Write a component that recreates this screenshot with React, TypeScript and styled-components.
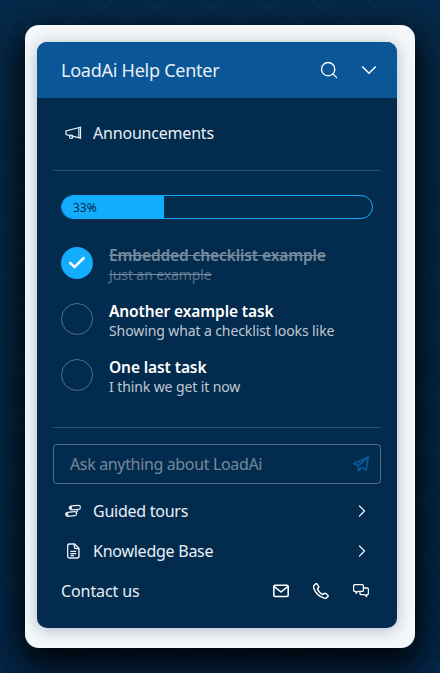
import React from 'react';
import styled, { createGlobalStyle } from 'styled-components';
import { Search, ChevronRight, Check } from 'lucide-react';

const GlobalStyle = createGlobalStyle`
  html, body {
    margin: 0;
    padding: 0;
    height: 100%;
  }
  body {
    font-family: "Noto Sans", "Open Sans", sans-serif;
    background: #04213c;
  }
`;

const Page = styled.div`
  width: 440px;
  height: 673px;
  box-sizing: border-box;
  padding: 25px;
  overflow: hidden;
  background:
    radial-gradient(circle at 20px 30px, transparent 7px, rgba(255, 255, 255, 0.016) 7.5px, rgba(255, 255, 255, 0.016) 9.5px, transparent 10px) -1px -3px / 55px 56px,
    radial-gradient(circle at 20px 30px, transparent 7px, rgba(255, 255, 255, 0.016) 7.5px, rgba(255, 255, 255, 0.016) 9.5px, transparent 10px) -28px 25px / 55px 56px,
    linear-gradient(180deg, #05294a 0%, #042844 60%, #03264a 100%);
`;

const Card = styled.div`
  width: 390px;
  height: 623px;
  box-sizing: border-box;
  padding: 17px 18px 20px 12px;
  background: #f5f8fb;
  border-radius: 14px;
  box-shadow: 0 14px 36px 6px rgba(0, 0, 0, 0.9);
`;

const Panel = styled.div`
  height: 586px;
  display: flex;
  flex-direction: column;
  background: #032b4e;
  border-radius: 10px;
  overflow: hidden;
  color: #fff;
  box-shadow: 0 2px 16px rgba(3, 43, 78, 0.3);
`;

const Header = styled.header`
  height: 56px;
  flex: none;
  display: flex;
  align-items: center;
  justify-content: space-between;
  padding: 0 20px 0 24px;
  background: #0a5696;
`;

const Title = styled.h1`
  margin: 0;
  font-size: 18px;
  font-weight: 400;
  color: #e8eff6;
  letter-spacing: -0.25px;
`;

const HeaderActions = styled.div`
  display: flex;
  align-items: center;
  gap: 22px;
  color: #fff;
`;

const Section = styled.section`
  margin: 0 16px;
  border-bottom: 1px solid rgba(255, 255, 255, 0.16);
`;

const AnnounceRow = styled.div`
  height: 72px;
  display: flex;
  align-items: center;
  gap: 11px;
  padding: 0 12px 2px;
  box-sizing: border-box;
  font-size: 16px;
  letter-spacing: -0.2px;
  color: #e8eff6;
`;

const ChecklistSection = styled(Section)`
  padding: 24px 8px 0;
  height: 257px;
  box-sizing: border-box;
`;

const Progress = styled.div`
  height: 24px;
  box-sizing: border-box;
  border: 1px solid #12adfc;
  border-radius: 12px;
  overflow: hidden;
  display: flex;
`;

const ProgressFill = styled.div`
  background: #12adfc;
  color: #032b4e;
  font-size: 12px;
  display: flex;
  align-items: center;
  padding-left: 11px;
  box-sizing: border-box;
`;

const Tasks = styled.div`
  margin-top: 28px;
  display: flex;
  flex-direction: column;
  gap: 24px;
`;

const Task = styled.div`
  display: flex;
  align-items: center;
  gap: 16px;
  height: 32px;
`;

const Circle = styled.span<{ $done?: boolean }>`
  width: 32px;
  height: 32px;
  flex: none;
  box-sizing: border-box;
  border-radius: 50%;
  display: flex;
  align-items: center;
  justify-content: center;
  color: #fff;
  background: ${({ $done }) => ($done ? '#12adfc' : 'transparent')};
  border: ${({ $done }) => ($done ? 'none' : '1px solid rgba(255, 255, 255, 0.3)')};
`;

const TaskText = styled.div<{ $done?: boolean }>`
  display: flex;
  flex-direction: column;
  padding-top: 2px;
  opacity: ${({ $done }) => ($done ? 0.45 : 1)};
  text-decoration: ${({ $done }) => ($done ? 'line-through' : 'none')};
`;

const TaskTitle = styled.span`
  font-size: 15.5px;
  font-weight: 600;
  line-height: 20px;
  letter-spacing: -0.1px;
`;

const TaskSub = styled.span`
  font-size: 14px;
  line-height: 19px;
  letter-spacing: -0.1px;
  color: rgba(255, 255, 255, 0.75);
`;

const Footer = styled.div`
  padding: 16px 16px 0;
`;

const AskBox = styled.div`
  height: 40px;
  box-sizing: border-box;
  margin-bottom: 7px;
  border: 1px solid rgba(255, 255, 255, 0.3);
  border-radius: 4px;
  display: flex;
  align-items: center;
  justify-content: space-between;
  padding: 0 11px 0 16px;
  font-size: 16px;
  letter-spacing: -0.35px;
  color: rgba(255, 255, 255, 0.45);
`;

const SendIcon = styled.svg`
  color: #0a5696;
`;

const LinkRow = styled.div`
  height: 40px;
  display: flex;
  align-items: center;
  padding: 0 9px 0 12px;
  gap: 12px;
  font-size: 16px;
  letter-spacing: -0.25px;
  color: #e8eff6;
`;

const IconSlot = styled.span`
  width: 16px;
  flex: none;
  display: flex;
  justify-content: center;
`;

const LinkLabel = styled.span`
  flex: 1;
`;

const ContactRow = styled.div`
  height: 40px;
  display: flex;
  align-items: center;
  justify-content: space-between;
  padding: 0 12px 0 8px;
  font-size: 16px;
  letter-spacing: -0.1px;
  color: #e8eff6;
`;

const ContactIcons = styled.div`
  display: flex;
  gap: 24px;
  color: #fff;
`;

const Chevron = () => (
  <svg width="16" height="10" viewBox="0 0 16 10" fill="none" stroke="currentColor" strokeWidth="1.5">
    <path d="M1.2 1.5 8 8.2l6.8-6.7" />
  </svg>
);

const MegaphoneIcon = () => (
  <svg width="17" height="14" viewBox="0 0 17 14" fill="none" stroke="currentColor" strokeWidth="1.2">
    <path d="M15.5 1.2v11L1 8.6V5z" />
    <path d="M13.8 1.8v10" />
    <circle cx="6.2" cy="10.8" r="1.7" />
  </svg>
);

const TourIcon = () => (
  <svg width="16" height="16" viewBox="0 0 16 16" fill="none" stroke="currentColor" strokeWidth="1.2">
    <rect x="4.6" y="2.6" width="10.8" height="4" rx="2" transform="rotate(-4 10 4.6)" />
    <rect x="0.8" y="9" width="10.8" height="4" rx="2" transform="rotate(-6 6 11)" />
    <circle cx="5.4" cy="4.8" r="1.1" fill="currentColor" />
    <circle cx="1.8" cy="11.4" r="1.1" fill="currentColor" />
    <path d="M12 6.8c1 1.2.2 2-.8 2.4" />
  </svg>
);

const DocIcon = () => (
  <svg width="13" height="16" viewBox="0 0 13 16" fill="none" stroke="currentColor" strokeWidth="1.4" strokeLinejoin="round">
    <path d="M2.4 1h5.2L12 5.4V13a2 2 0 0 1-2 2H2.6a2 2 0 0 1-2-2V3a2 2 0 0 1 1.8-2z" />
    <path d="M7.4 1v3a1.6 1.6 0 0 0 1.6 1.6h3" />
    <path d="M3.4 8.4h5.8M3.4 10.6h5.8M3.4 12.6h3.6" strokeWidth="1.1" />
  </svg>
);

const MailIcon = () => (
  <svg width="16" height="16" viewBox="0 0 16 16" fill="none" stroke="currentColor" strokeWidth="1.6" strokeLinejoin="round">
    <rect x="0.8" y="2.3" width="14.4" height="11.2" rx="1.4" />
    <path d="M1 3.4 8 9l7-5.6" />
  </svg>
);

const PhoneIcon = () => (
  <svg width="16" height="16" viewBox="0 0 16 16" fill="none" stroke="currentColor" strokeWidth="1.4" strokeLinejoin="round">
    <path d="M1 2.4 2.6.9c.5-.4 1.1-.3 1.5.2l1.5 2.3c.3.5.2 1-.2 1.4l-1 1c.8 2.3 3.1 4.8 5.6 5.8l1-1c.4-.4 1-.5 1.4-.2l2.3 1.6c.5.4.6 1 .2 1.5l-1.3 1.3c-.6.6-1.4.7-2.3.4C6 13.6 2.4 10 .8 5.3c-.3-1-.3-2.2.2-2.9z" />
  </svg>
);

const ChatIcon = () => (
  <svg width="16" height="16" viewBox="0 0 16 16" fill="none" stroke="currentColor" strokeWidth="1.3" strokeLinejoin="round">
    <path d="M1.8 1.6h7.4a1.2 1.2 0 0 1 1.2 1.2v4.4a1.2 1.2 0 0 1-1.2 1.2H5L3 10.4V8.4H1.8A1.2 1.2 0 0 1 .6 7.2V2.8a1.2 1.2 0 0 1 1.2-1.2z" />
    <path d="M10.6 5h3.6a1.2 1.2 0 0 1 1.2 1.2v4.2a1.2 1.2 0 0 1-1.2 1.2h-.6v2l-2-2H8.2a1.2 1.2 0 0 1-1.2-1.2V8.6" />
  </svg>
);

const tasks = [
  { title: 'Embedded checklist example', sub: 'Just an example', done: true },
  { title: 'Another example task', sub: 'Showing what a checklist looks like', done: false },
  { title: 'One last task', sub: 'I think we get it now', done: false },
];

const App: React.FC = () => (
  <Page>
    <GlobalStyle />
    <Card>
      <Panel>
        <Header>
          <Title>LoadAi Help Center</Title>
          <HeaderActions>
            <Search size={20} strokeWidth={1.6} />
            <Chevron />
          </HeaderActions>
        </Header>
        <Section>
          <AnnounceRow>
            <MegaphoneIcon />
            Announcements
          </AnnounceRow>
        </Section>
        <ChecklistSection>
          <Progress>
            <ProgressFill style={{ width: '33%' }}>33%</ProgressFill>
          </Progress>
          <Tasks>
            {tasks.map(task => (
              <Task key={task.title}>
                <Circle $done={task.done}>{task.done && <Check size={20} strokeWidth={3} />}</Circle>
                <TaskText $done={task.done}>
                  <TaskTitle>{task.title}</TaskTitle>
                  <TaskSub>{task.sub}</TaskSub>
                </TaskText>
              </Task>
            ))}
          </Tasks>
        </ChecklistSection>
        <Footer>
          <AskBox>
            Ask anything about LoadAi
            <SendIcon width="16" height="16" viewBox="0 0 16 16" fill="none" stroke="currentColor" strokeWidth="1.8" strokeLinejoin="round">
              <path d="M15.2 1 1 7.6l4.2 2.2L15.2 1l-2 13-5-2.4-2.6 3.2-.4-5" />
            </SendIcon>
          </AskBox>
          <LinkRow>
            <IconSlot><TourIcon /></IconSlot>
            <LinkLabel>Guided tours</LinkLabel>
            <ChevronRight size={20} strokeWidth={1.5} />
          </LinkRow>
          <LinkRow>
            <IconSlot><DocIcon /></IconSlot>
            <LinkLabel>Knowledge Base</LinkLabel>
            <ChevronRight size={20} strokeWidth={1.5} />
          </LinkRow>
          <ContactRow>
            Contact us
            <ContactIcons>
              <MailIcon />
              <PhoneIcon />
              <ChatIcon />
            </ContactIcons>
          </ContactRow>
        </Footer>
      </Panel>
    </Card>
  </Page>
);

export default App;
